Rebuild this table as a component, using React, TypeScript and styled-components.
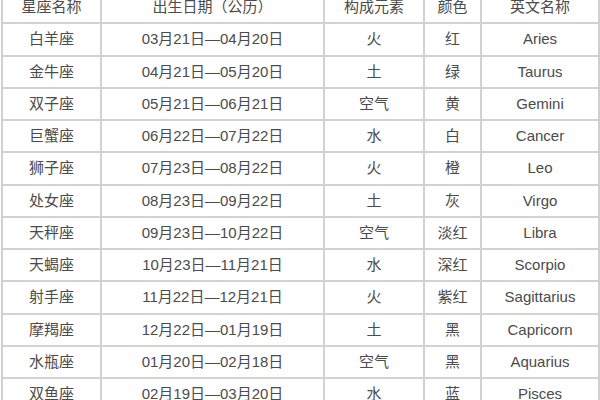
import { ReactElement } from "react";
import styled, { createGlobalStyle } from "styled-components";

const GlobalStyle = createGlobalStyle`
  html, body {
    margin: 0;
    padding: 0;
    background: #ffffff;
    overflow: hidden;
  }
`;

const Page = styled.div`
  width: 600px;
  height: 400px;
  overflow: hidden;
  background: #ffffff;
`;

const StyledTable = styled.table`
  margin: -10px 0 0 1px;
  width: 597px;
  table-layout: fixed;
  border-collapse: separate;
  border-spacing: 0;
  border: 1px solid #cfcfcf;
  font-family: "Liberation Sans", "Noto Sans CJK SC", sans-serif;
  font-size: 15px;
  color: #4b4b4b;
`;

const Row = styled.tr`
  height: 32.25px;
`;

const Cell = styled.td`
  padding: 0;
  border: 1px solid #d2d2d2;
  text-align: center;
  vertical-align: middle;
  white-space: nowrap;
  line-height: 18px;
`;

const HeadCell = styled(Cell).attrs({ as: "th" })`
  font-weight: normal;
`;

const columns = [
  { title: "星座名称", width: 99 },
  { title: "出生日期（公历）", width: 223 },
  { title: "构成元素", width: 100 },
  { title: "颜色", width: 57 },
  { title: "英文名称", width: 118 },
];

const signs = [
  ["白羊座", "03月21日—04月20日", "火", "红", "Aries"],
  ["金牛座", "04月21日—05月20日", "土", "绿", "Taurus"],
  ["双子座", "05月21日—06月21日", "空气", "黄", "Gemini"],
  ["巨蟹座", "06月22日—07月22日", "水", "白", "Cancer"],
  ["狮子座", "07月23日—08月22日", "火", "橙", "Leo"],
  ["处女座", "08月23日—09月22日", "土", "灰", "Virgo"],
  ["天秤座", "09月23日—10月22日", "空气", "淡红", "Libra"],
  ["天蝎座", "10月23日—11月21日", "水", "深红", "Scorpio"],
  ["射手座", "11月22日—12月21日", "火", "紫红", "Sagittarius"],
  ["摩羯座", "12月22日—01月19日", "土", "黑", "Capricorn"],
  ["水瓶座", "01月20日—02月18日", "空气", "黑", "Aquarius"],
  ["双鱼座", "02月19日—03月20日", "水", "蓝", "Pisces"],
];

export default function App(): ReactElement {
  return (
    <Page>
      <GlobalStyle />
      <StyledTable>
        <colgroup>
          {columns.map((c) => (
            <col key={c.title} style={{ width: c.width }} />
          ))}
        </colgroup>
        <thead>
          <Row>
            {columns.map((c) => (
              <HeadCell key={c.title}>{c.title}</HeadCell>
            ))}
          </Row>
        </thead>
        <tbody>
          {signs.map((s) => (
            <Row key={s[0]}>
              {s.map((v, i) => (
                <Cell key={i}>{v}</Cell>
              ))}
            </Row>
          ))}
        </tbody>
      </StyledTable>
    </Page>
  );
}
